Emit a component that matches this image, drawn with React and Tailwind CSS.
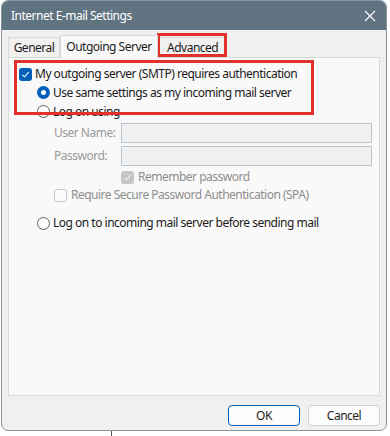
import React from 'react';

const font = { fontFamily: '"Noto Sans", "Open Sans", sans-serif' };

const Check = ({ disabled }) => (
  <span
    className={`w-[13px] h-[13px] rounded-[3px] flex items-center justify-center shrink-0 ${
      disabled ? 'bg-[#c5c5c5]' : 'bg-[#005fb8]'
    }`}
  >
    <svg width="9" height="9" viewBox="0 0 9 9">
      <path d="M1.5 4.8 L3.6 6.8 L7.6 2.2" fill="none" stroke={disabled ? '#f4f4f4' : '#fff'} strokeWidth="1.1" />
    </svg>
  </span>
);

const EmptyBox = () => (
  <span className="w-[13px] h-[13px] rounded-[3px] border border-[#c8c8c8] bg-[#fbfbfb] shrink-0" />
);

const Radio = ({ on }) =>
  on ? (
    <span className="w-[13px] h-[13px] rounded-full bg-[#005fb8] flex items-center justify-center shrink-0">
      <span className="w-[5px] h-[5px] rounded-full bg-white" />
    </span>
  ) : (
    <span className="w-[13px] h-[13px] rounded-full border border-[#5e5e5e] bg-[#fdfdfd] shrink-0" />
  );

const App = () => {
  return (
    <div
      className="w-[390px] h-[436px] bg-white relative overflow-hidden text-[12px] tracking-[-0.5px] whitespace-nowrap text-[#1b1b1b]"
      style={font}
    >
      <div className="ml-[1px] w-[386px] h-[431px] rounded-[7px] bg-[#f0f0f0] border border-[#8796a0] overflow-hidden flex flex-col">
        {/* Title bar */}
        <div className="h-[29px] bg-[#5f7380] flex items-center justify-between pl-[9px] pr-[8px] text-white text-[12px]">
          <span>Internet E-mail Settings</span>
          <svg width="12" height="12" viewBox="0 0 12 12" className="mr-[2px]">
            <path d="M1 1 L11 11 M11 1 L1 11" stroke="#fff" strokeWidth="1.1" />
          </svg>
        </div>

        {/* Tabs */}
        <div className="px-[6px] pt-[4px] flex items-end h-[27px]">
          <div className="w-[52px] h-[20px] border border-b-0 border-[#d9d9d9] bg-[#f0f0f0] flex items-center justify-center">
            General
          </div>
          <div className="w-[98px] h-[23px] border border-b-0 border-[#d9d9d9] bg-[#f9f9f9] flex items-center justify-center -mb-[1px] relative z-10">
            Outgoing Server
          </div>
          <div className="w-[68px] h-[20px] pl-[9px] border border-b-0 border-l-0 border-[#d9d9d9] bg-[#f0f0f0] flex items-center">
            Advanced
          </div>
        </div>

        {/* Panel */}
        <div className="mx-[6px] h-[339px] border border-[#d9d9d9] bg-[#f9f9f9] pt-[7px] pl-[10px] pr-[7px]">
          <div className="h-[18px] flex items-center gap-[3px]">
            <Check />
            <span>My outgoing server (SMTP) requires authentication</span>
          </div>
          <div className="h-[19px] flex items-center gap-[3px] pl-[18px]">
            <Radio on />
            <span>Use same settings as my incoming mail server</span>
          </div>
          <div className="h-[19px] flex items-center gap-[3px] pl-[18px]">
            <Radio />
            <span>Log on using</span>
          </div>
          <div className="mt-[2px] h-[20px] flex items-center pl-[35px] text-[#9a9a9a]">
            <span className="w-[67px]">User Name:</span>
            <div className="flex-1 h-[20px] border border-[#b8c4cf] bg-[#f0f0f0]" />
          </div>
          <div className="mt-[3px] h-[20px] flex items-center pl-[35px] text-[#9a9a9a]">
            <span className="w-[67px]">Password:</span>
            <div className="flex-1 h-[20px] border border-[#b8c4cf] bg-[#f0f0f0]" />
          </div>
          <div className="mt-[2px] h-[18px] flex items-center gap-[4px] pl-[102px] text-[#8d8d8d]">
            <Check disabled />
            <span>Remember password</span>
          </div>
          <div className="h-[18px] flex items-center gap-[4px] pl-[35px] text-[#8d8d8d]">
            <EmptyBox />
            <span>Require Secure Password Authentication (SPA)</span>
          </div>
          <div className="mt-[10px] h-[18px] flex items-center gap-[3px] pl-[18px]">
            <Radio />
            <span>Log on to incoming mail server before sending mail</span>
          </div>
        </div>

        {/* Buttons */}
        <div className="flex justify-end gap-[8px] pr-[6px] pt-[9px]">
          <button className="w-[72px] h-[21px] rounded-[4px] border border-[#005fb8] bg-[#fdfdfd] flex items-center justify-center">
            OK
          </button>
          <button className="w-[72px] h-[21px] rounded-[4px] border border-[#d0d0d0] bg-[#fdfdfd] flex items-center justify-center">
            Cancel
          </button>
        </div>
      </div>

      {/* annotation boxes */}
      <div className="absolute left-[157px] top-[33px] w-[70px] h-[24px] border-[3px] border-[#e2302b] pointer-events-none" />
      <div className="absolute left-[14px] top-[60px] w-[300px] h-[55px] border-[3px] border-[#e2302b] pointer-events-none" />

      <div className="absolute left-[111px] top-[431px] w-[1px] h-[5px] bg-[#555]" />
    </div>
  );
};

export default App;
